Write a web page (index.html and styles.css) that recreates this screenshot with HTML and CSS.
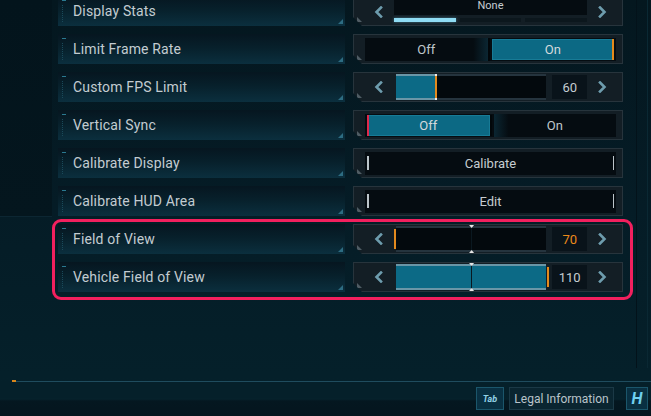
FILE: index.html
```html
<!DOCTYPE html>
<html lang="en">
<head>
<meta charset="utf-8">
<title>Graphics Settings</title>
<link rel="stylesheet" href="styles.css">
</head>
<body>
<div class="page">
  <div class="content">
    <div class="list">
      <div class="row">
        <div class="label">Display Stats</div>
        <div class="control">
          <div class="arrow"><svg viewBox="0 0 9 12"><path d="M7 1.5 L2.5 6 L7 10.5"/></svg></div>
          <div class="select">
            <div class="select-value">None</div>
            <div class="segments"><span class="seg on"></span><span class="seg"></span><span class="seg"></span></div>
          </div>
          <div class="arrow arrow-r"><svg viewBox="0 0 9 12"><path d="M2 1.5 L6.5 6 L2 10.5"/></svg></div>
        </div>
      </div>

      <div class="row">
        <div class="label">Limit Frame Rate</div>
        <div class="control">
          <div class="toggle">
            <div class="opt lit-right">Off</div>
            <div class="opt sel sel-right">On</div>
          </div>
        </div>
      </div>

      <div class="row">
        <div class="label">Custom FPS Limit</div>
        <div class="control slider">
          <div class="arrow"><svg viewBox="0 0 9 12"><path d="M7 1.5 L2.5 6 L7 10.5"/></svg></div>
          <div class="track">
            <div class="fill" style="width:26%"></div>
            <div class="rest"></div>
            <div class="marker dots" style="left:26%"></div>
          </div>
          <div class="value">60</div>
          <div class="arrow arrow-r"><svg viewBox="0 0 9 12"><path d="M2 1.5 L6.5 6 L2 10.5"/></svg></div>
        </div>
      </div>

      <div class="row">
        <div class="label">Vertical Sync</div>
        <div class="control">
          <div class="toggle">
            <div class="opt sel sel-left">Off</div>
            <div class="opt lit-left">On</div>
          </div>
        </div>
      </div>

      <div class="row">
        <div class="label">Calibrate Display</div>
        <div class="control">
          <div class="button">Calibrate</div>
        </div>
      </div>

      <div class="row">
        <div class="label">Calibrate HUD Area</div>
        <div class="control">
          <div class="button">Edit</div>
        </div>
      </div>

      <div class="highlight">
        <div class="row">
          <div class="label">Field of View</div>
          <div class="control slider">
            <div class="arrow"><svg viewBox="0 0 9 12"><path d="M7 1.5 L2.5 6 L7 10.5"/></svg></div>
            <div class="track">
              <div class="fill" style="width:0%"></div>
              <div class="rest"></div>
              <div class="center-tick"></div>
              <div class="marker edge-l"></div>
            </div>
            <div class="value orange">70</div>
            <div class="arrow arrow-r"><svg viewBox="0 0 9 12"><path d="M2 1.5 L6.5 6 L2 10.5"/></svg></div>
          </div>
        </div>
        <div class="row">
          <div class="label">Vehicle Field of View</div>
          <div class="control slider">
            <div class="arrow"><svg viewBox="0 0 9 12"><path d="M7 1.5 L2.5 6 L7 10.5"/></svg></div>
            <div class="track">
              <div class="fill" style="width:100%"></div>
              <div class="rest"></div>
              <div class="center-tick"></div>
              <div class="marker edge-r"></div>
            </div>
            <div class="value">110</div>
            <div class="arrow arrow-r"><svg viewBox="0 0 9 12"><path d="M2 1.5 L6.5 6 L2 10.5"/></svg></div>
          </div>
        </div>
      </div>
    </div>
  </div>
  <div class="rule"></div>
  <div class="footer">
    <div class="key key-tab">Tab</div>
    <div class="legal">Legal Information</div>
    <div class="key key-h">H</div>
  </div>
</div>
</body>
</html>
```
FILE: styles.css
```css
* { box-sizing: border-box; margin: 0; padding: 0; }

body {
  width: 651px;
  height: 416px;
  overflow: hidden;
  background: #051d27;
  font-family: Roboto, "Liberation Sans", sans-serif;
}

.page {
  position: relative;
  height: 416px;
  display: flex;
  flex-direction: column;
  background:
    linear-gradient(#0c2632, #0c2632) 0 216px / 52px 1px no-repeat,
    linear-gradient(#03141c, #04161e) 0 0 / 52px 216px no-repeat,
    linear-gradient(#03121a, #03121a) 636px 0 / 1px 368px no-repeat,
    linear-gradient(#0a2833, #0a2833) 647px 0 / 1px 368px no-repeat,
    linear-gradient(180deg, #04171f 0%, #051c26 50%, #05212b 100%);
}

.content {
  height: 381px;
  overflow: hidden;
}

.list {
  margin-top: -4px;
  padding-left: 58px;
  width: 623px;
  display: flex;
  flex-direction: column;
  gap: 8px;
}

.highlight {
  position: relative;
  display: flex;
  flex-direction: column;
  gap: 8px;
}

.highlight::after {
  content: "";
  position: absolute;
  top: -5px;
  left: -6px;
  right: -10px;
  bottom: -8px;
  border: 3px solid #f2205e;
  border-radius: 9px;
  pointer-events: none;
}

.row {
  display: flex;
  gap: 8px;
  height: 30px;
}

/* label panel */
.label {
  position: relative;
  width: 287px;
  padding-left: 15px;
  display: flex;
  align-items: center;
  font-size: 14px;
  letter-spacing: 0.15px;
  color: #c3ccd1;
  background:
    linear-gradient(#2a7990, #2a7990) 4px 4px / 4px 1px no-repeat,
    linear-gradient(180deg, #061620 0%, #07202b 45%, #0b2f3e 100%);
}

.label::before {
  content: "";
  position: absolute;
  left: 4px;
  top: 9px;
  bottom: 4px;
  border-left: 1px dotted #1a4a5a;
}

.label::after {
  content: "";
  position: absolute;
  right: 2px;
  bottom: 2px;
  width: 5px;
  height: 5px;
  background: #2d6c82;
  clip-path: polygon(100% 0, 100% 100%, 0 100%);
}

/* control frame */
.control {
  position: relative;
  width: 270px;
  display: flex;
  padding: 3px 6px 2px 11px;
  background: #131e25;
  border: 1px solid #27343c;
  clip-path: polygon(0 0, 100% 0, 100% 100%, 9px 100%, 0 calc(100% - 9px));
}

.control::before {
  content: "";
  position: absolute;
  left: 3px;
  bottom: 3px;
  width: 5px;
  height: 5px;
  background: #4f5c64;
  clip-path: polygon(0 0, 100% 100%, 0 100%);
}

.control.slider {
  padding-top: 1px;
  padding-bottom: 1px;
}

.arrow {
  width: 28px;
  display: flex;
  align-items: center;
  justify-content: center;
}

.arrow-r {
  width: 27px;
}

.arrow svg {
  width: 9px;
  height: 12px;
  fill: none;
  stroke: #6d9cad;
  stroke-width: 2.6;
  stroke-linecap: square;
}

/* select (display stats) */
.select {
  width: 194px;
  margin-left: 1px;
  margin-right: 2px;
  display: flex;
  flex-direction: column;
}

.select-value {
  height: 15px;
  background: #050c11;
  font-size: 11px;
  line-height: 12px;
  color: #c5cdd1;
  text-align: center;
}

.segments {
  display: flex;
  gap: 4px;
  margin-top: 3px;
  height: 4px;
}

.seg {
  flex: 1;
  background: #0c171d;
}

.seg.on {
  background: #8fdcf4;
  box-shadow: 0 0 3px rgba(120, 210, 240, 0.5);
}

/* toggle */
.toggle {
  flex: 1;
  display: flex;
  background: #050c11;
}

.opt {
  position: relative;
  flex: 1;
  display: flex;
  align-items: center;
  justify-content: center;
  font-size: 13px;
  color: #bfc7cb;
}

.opt:first-child {
  border-right: 2px solid #02070a;
}

.opt.sel {
  margin: 1px 2px 1px 2px;
  background: #0c6984;
  box-shadow: inset 0 0 0 1px #177b96;
  color: #d3dadd;
}

.opt.sel-right::after {
  content: "";
  position: absolute;
  right: 0;
  top: 0;
  bottom: 0;
  width: 2px;
  background: #e48a1c;
}

.opt.sel-left::after {
  content: "";
  position: absolute;
  left: 0;
  top: 0;
  bottom: 0;
  width: 2px;
  background: #e0284c;
}

.opt.lit-right {
  background: linear-gradient(to right, #050c11 88%, #0b2632 100%);
}

.opt.lit-left {
  background: linear-gradient(to left, #050c11 88%, #0b2632 100%);
}

/* button */
.button {
  position: relative;
  flex: 1;
  background: #050c11;
  display: flex;
  align-items: center;
  justify-content: center;
  font-size: 13px;
  color: #c5ccd0;
}

.button::before,
.button::after {
  content: "";
  position: absolute;
  top: 4px;
  bottom: 5px;
  width: 1.5px;
  background: #bcc5ca;
}

.button::before { left: 2px; }
.button::after { right: 2px; }

/* slider */
.track {
  position: relative;
  width: 151px;
  margin-left: 3px;
  display: flex;
  background: #03090d;
}

.fill {
  background: #0c6a86;
  border-top: 2px solid #6a96a7;
  border-bottom: 2px solid #6a96a7;
}

.rest {
  flex: 1;
  border-top: 2px solid #25343e;
  border-bottom: 2px solid #25343e;
}

.marker {
  position: absolute;
  top: 0;
  bottom: 0;
  width: 2px;
  background: #e38a1e;
}

.marker.dots::before,
.marker.dots::after {
  content: "";
  position: absolute;
  left: 0;
  width: 2px;
  height: 2px;
  background: #ececec;
}

.marker.dots::before { top: 0; }
.marker.dots::after { bottom: 0; }

.marker.edge-l {
  left: -2px;
  top: 3px;
  bottom: 3px;
}

.marker.edge-r {
  right: -3px;
  top: 3px;
  bottom: 3px;
}

.center-tick {
  position: absolute;
  left: 50%;
  top: 0;
  bottom: 0;
  width: 1px;
  background: #0a1820;
}

.center-tick::before,
.center-tick::after {
  content: "";
  position: absolute;
  left: -2px;
  width: 5px;
  height: 3px;
  background: #e6e6e6;
}

.center-tick::before {
  top: -1px;
  clip-path: polygon(0 0, 100% 0, 50% 100%);
}

.center-tick::after {
  bottom: -1px;
  clip-path: polygon(50% 0, 100% 100%, 0 100%);
}

.value {
  width: 35px;
  margin: 1px 2px 1px 6px;
  background: #09131a;
  display: flex;
  align-items: center;
  justify-content: center;
  font-size: 13px;
  color: #c5cdd1;
}

.value.orange {
  color: #ec8a1a;
}

/* bottom */
.rule {
  position: relative;
  height: 1px;
  margin-left: 12px;
  background: #1f4c5e;
}

.rule::before {
  content: "";
  position: absolute;
  left: 0;
  top: -1px;
  width: 4px;
  height: 2px;
  background: #d8861c;
}

.footer {
  flex: 1;
  display: flex;
  justify-content: flex-end;
  align-items: flex-start;
  padding: 5px 3px 0 0;
  background: linear-gradient(180deg, #05202a 0, #05202a 16px, #06222c 17px, #041720 19px, #04151e 100%);
}

.key {
  height: 23px;
  display: flex;
  align-items: center;
  justify-content: center;
  background: #093042;
  border: 1px solid #1b566b;
  font-style: italic;
  font-weight: bold;
}

.key-tab {
  width: 28px;
  font-size: 9px;
  color: #93d2e6;
}

.key-h {
  width: 22px;
  margin-left: 12px;
  font-size: 16px;
  color: #70d0f0;
}

.legal {
  width: 105px;
  height: 23px;
  margin-left: 5px;
  display: flex;
  align-items: center;
  justify-content: center;
  background: #0a2530;
  border: 1px solid #1b3946;
  font-size: 12px;
  color: #b9c4ca;
}
```
